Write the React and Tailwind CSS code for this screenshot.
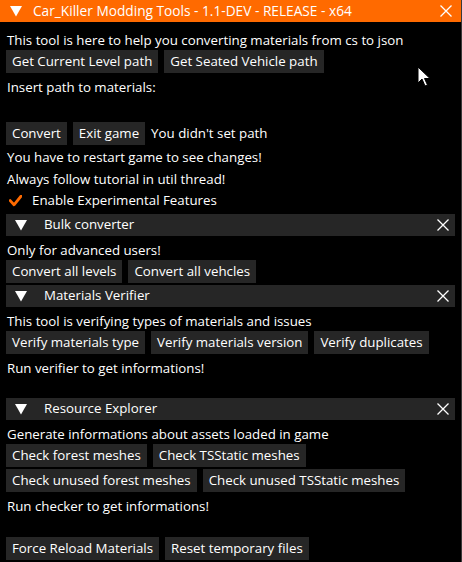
import React from "react";

const font = { fontFamily: '"Open Sans", "Noto Sans", sans-serif' };

function Tri({ className = "" }) {
  return (
    <svg width="12" height="11" viewBox="0 0 12 11" className={className}>
      <polygon points="0,0 12,0 6,10.5" fill="#ffffff" />
    </svg>
  );
}

function Cross() {
  return (
    <svg width="12" height="12" viewBox="0 0 12 12">
      <path d="M0.5 0.5 L11.5 11.5 M11.5 0.5 L0.5 11.5" stroke="#ffffff" strokeWidth="1.3" />
    </svg>
  );
}

function Btn({ children }) {
  return (
    <div className="h-full flex items-center px-[6px] bg-[#262626] text-white whitespace-nowrap">
      {children}
    </div>
  );
}

function BtnRow({ items, className = "", tail }) {
  return (
    <div className={`flex items-center gap-[6px] px-[6px] h-[23px] ${className}`}>
      {items.map((t) => (
        <Btn key={t}>{t}</Btn>
      ))}
      {tail && <span className="text-white whitespace-nowrap">{tail}</span>}
    </div>
  );
}

function Line({ children, className = "" }) {
  return (
    <div className={`h-[16px] leading-[16px] px-[7px] text-white whitespace-nowrap ${className}`}>
      {children}
    </div>
  );
}

function Header({ title, className = "" }) {
  return (
    <div className={`mx-[6px] h-[22px] bg-[#262626] flex items-center pl-[9px] pr-[6px] ${className}`}>
      <Tri />
      <span className="ml-[17px] text-white flex-1">{title}</span>
      <Cross />
    </div>
  );
}

export default function App() {
  return (
    <div
      className="relative w-[462px] h-[562px] bg-black overflow-hidden border-r border-[#3a3a3a] text-[13.3px]"
      style={font}
    >
      {/* title bar */}
      <div className="h-[22px] bg-[#ff6a00] flex items-center pl-[10px] pr-[9px]">
        <Tri />
        <span className="ml-[11px] text-white flex-1 whitespace-nowrap text-[13.7px]">
          Car_Killer Modding Tools - 1.1-DEV - RELEASE - x64
        </span>
        <Cross />
      </div>

      <Line className="mt-[10px]">
        This tool is here to help you converting materials from cs to json
      </Line>
      <BtnRow
        className="mt-[2px] h-[22px]"
        items={["Get Current Level path", "Get Seated Vehicle path"]}
      />
      <Line className="mt-[6px]">Insert path to materials:</Line>
      <BtnRow
        className="mt-[27px]"
        items={["Convert", "Exit game"]}
        tail="You didn't set path"
      />
      <Line className="mt-[4px]">You have to restart game to see changes!</Line>
      <Line className="mt-[6px]">Always follow tutorial in util thread!</Line>
      <div className="mt-[6px] h-[16px] flex items-center pl-[9px] text-white">
        <svg width="13" height="12" viewBox="0 0 13 12">
          <path d="M1.2 5.6 L5 9.8 L12 1.2" fill="none" stroke="#ff6a00" strokeWidth="2.8" strokeLinecap="round" strokeLinejoin="round" />
        </svg>
        <span className="ml-[10px] whitespace-nowrap">Enable Experimental Features</span>
      </div>

      <Header title="Bulk converter" className="mt-[5px]" />
      <Line className="mt-[6px]">Only for advanced users!</Line>
      <BtnRow className="mt-[2px]" items={["Convert all levels", "Convert all vehcles"]} />

      <Header title="Materials Verifier" className="mt-[2px]" />
      <Line className="mt-[6px]">This tool is verifying types of materials and issues</Line>
      <BtnRow
        className="mt-[2px]"
        items={["Verify materials type", "Verify materials version", "Verify duplicates"]}
      />
      <Line className="mt-[6px]">Run verifier to get informations!</Line>

      <Header title="Resource Explorer" className="mt-[22px]" />
      <Line className="mt-[6px]">Generate informations about assets loaded in game</Line>
      <BtnRow className="mt-[2px]" items={["Check forest meshes", "Check TSStatic meshes"]} />
      <BtnRow
        className="mt-[2px]"
        items={["Check unused forest meshes", "Check unused TSStatic meshes"]}
      />
      <Line className="mt-[6px]">Run checker to get informations!</Line>
      <BtnRow
        className="mt-[23px] h-[22px]"
        items={["Force Reload Materials", "Reset temporary files"]}
      />

      {/* mouse cursor */}
      <svg
        className="absolute left-[417px] top-[66px]"
        width="14"
        height="22"
        viewBox="0 0 14 22"
      >
        <path
          d="M1 1 L1 17 L5 13 L8 20 L10.5 19 L7.5 12.5 L13 12.5 Z"
          fill="#ffffff"
          stroke="#000000"
          strokeWidth="1"
          strokeLinejoin="round"
        />
      </svg>
    </div>
  );
}
